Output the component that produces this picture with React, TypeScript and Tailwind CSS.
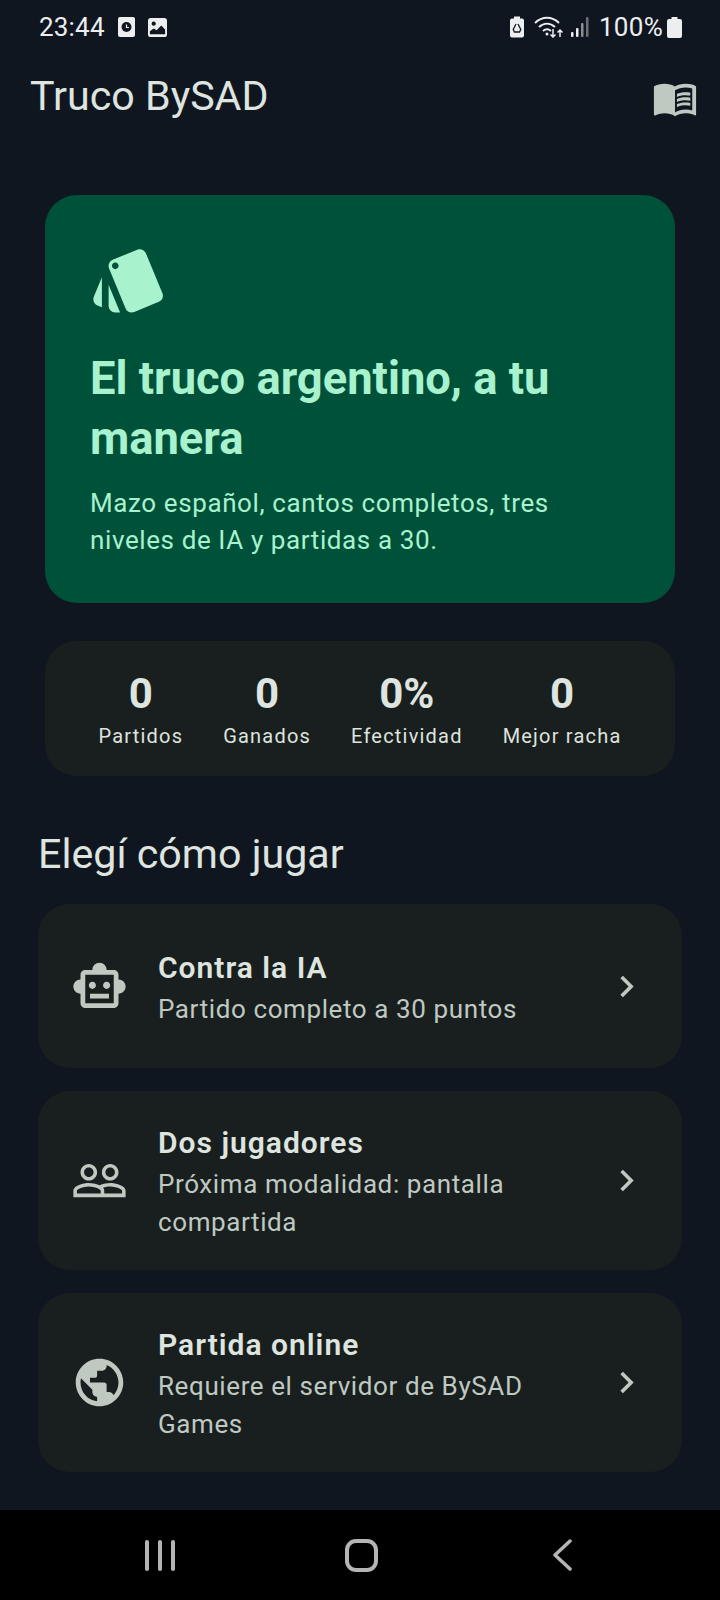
const font = { fontFamily: "Roboto, sans-serif" };

const icons = {
  style:
    "M2.53 19.65l1.34.56v-9.03l-2.43 5.86c-.41 1.02.08 2.19 1.09 2.61zm19.5-3.7L17.07 3.98c-.31-.75-1.04-1.21-1.81-1.23-.26 0-.53.04-.79.15L7.1 5.95c-.75.31-1.21 1.03-1.23 1.8-.01.27.04.54.15.8l4.96 11.97c.31.76 1.05 1.22 1.83 1.23.26 0 .52-.05.77-.15l7.36-3.05c1.02-.42 1.51-1.59 1.09-2.6zM7.88 8.75c-.55 0-1-.45-1-1s.45-1 1-1 1 .45 1 1-.45 1-1 1zm-2 11c0 1.1.9 2 2 2h1.45l-3.45-8.34v6.34z",
  book:
    "M21 5c-1.11-.35-2.33-.5-3.5-.5-1.95 0-4.05.4-5.5 1.5-1.45-1.1-3.55-1.5-5.5-1.5S2.45 4.9 1 6v14.65c0 .25.25.5.5.5.1 0 .15-.05.25-.05C3.1 20.45 5.05 20 6.5 20c1.95 0 4.05.4 5.5 1.5 1.35-.85 3.8-1.5 5.5-1.5 1.65 0 3.35.3 4.75 1.05.1.05.15.05.25.05.25 0 .5-.25.5-.5V6c-.6-.45-1.25-.75-2-1zm0 13.5c-1.1-.35-2.3-.5-3.5-.5-1.7 0-4.15.65-5.5 1.5V8c1.35-.85 3.8-1.5 5.5-1.5 1.2 0 2.4.15 3.5.5v11.5z M17.5 10.5c.88 0 1.73.09 2.5.26V9.24c-.79-.15-1.64-.24-2.5-.24-1.7 0-3.24.29-4.5.83v1.66c1.13-.64 2.7-.99 4.5-.99zM13 12.49v1.66c1.13-.64 2.7-.99 4.5-.99.88 0 1.73.09 2.5.26V11.9c-.79-.15-1.64-.24-2.5-.24-1.7 0-3.24.3-4.5.83zM17.5 14.33c-1.7 0-3.24.29-4.5.83v1.66c1.13-.64 2.7-.99 4.5-.99.88 0 1.73.09 2.5.26v-1.52c-.79-.16-1.64-.24-2.5-.24z",
  robot:
    "M20 9V7c0-1.1-.9-2-2-2h-3c0-1.66-1.34-3-3-3S9 3.34 9 5H6c-1.1 0-2 .9-2 2v2c-1.66 0-3 1.34-3 3s1.34 3 3 3v4c0 1.1.9 2 2 2h12c1.1 0 2-.9 2-2v-4c1.66 0 3-1.34 3-3s-1.34-3-3-3zm-2 10H6V7h12v12zm-9-6c-.83 0-1.5-.67-1.5-1.5S8.17 10 9 10s1.5.67 1.5 1.5S9.83 13 9 13zm7.5-1.5c0 .83-.67 1.5-1.5 1.5s-1.5-.67-1.5-1.5.67-1.5 1.5-1.5 1.5.67 1.5 1.5zM8 15h8v2H8v-2z",
  people:
    "M16.5 13c-1.2 0-3.07.34-4.5 1-1.43-.67-3.3-1-4.5-1C5.33 13 1 14.08 1 16.25V19h22v-2.75c0-2.17-4.33-3.25-6.5-3.25zm-4 4.5h-10v-1.25c0-.54 2.56-1.75 5-1.75s5 1.21 5 1.75v1.25zm9 0H14v-1.25c0-.46-.2-.86-.52-1.22.88-.3 1.96-.53 3.02-.53 2.44 0 5 1.21 5 1.75v1.25zM7.5 12c1.93 0 3.5-1.57 3.5-3.5S9.43 5 7.5 5 4 6.57 4 8.5 5.57 12 7.5 12zm0-5.5c1.1 0 2 .9 2 2s-.9 2-2 2-2-.9-2-2 .9-2 2-2zm9 5.5c1.93 0 3.5-1.57 3.5-3.5S18.43 5 16.5 5 13 6.57 13 8.5s1.57 3.5 3.5 3.5zm0-5.5c1.1 0 2 .9 2 2s-.9 2-2 2-2-.9-2-2 .9-2 2-2z",
  globe:
    "M12 2C6.48 2 2 6.48 2 12s4.48 10 10 10 10-4.48 10-10S17.52 2 12 2zm-1 17.93c-3.95-.49-7-3.85-7-7.93 0-.62.08-1.21.21-1.79L9 15v1c0 1.1.9 2 2 2v1.93zm6.9-2.54c-.26-.81-1-1.39-1.9-1.39h-1v-3c0-.55-.45-1-1-1H8v-2h2c.55 0 1-.45 1-1V7h2c1.1 0 2-.9 2-2v-.41c2.93 1.19 5 4.06 5 7.41 0 2.08-.8 3.97-2.1 5.39z",
  chevron: "M10 6L8.59 7.41 13.17 12l-4.58 4.59L10 18l6-6z",
};

function Icon({ d, className }: { d: string; className: string }) {
  return (
    <svg viewBox="0 0 24 24" fill="currentColor" className={className}>
      <path d={d} />
    </svg>
  );
}

const stats = [
  { value: "0", label: "Partidos" },
  { value: "0", label: "Ganados" },
  { value: "0%", label: "Efectividad" },
  { value: "0", label: "Mejor racha" },
];

const modes = [
  { icon: icons.robot, title: "Contra la IA", lines: ["Partido completo a 30 puntos"], h: "h-[164px]" },
  { icon: icons.people, title: "Dos jugadores", lines: ["Próxima modalidad: pantalla", "compartida"], h: "h-[179px]" },
  { icon: icons.globe, title: "Partida online", lines: ["Requiere el servidor de BySAD", "Games"], h: "h-[179px]" },
];

function StatusBar() {
  return (
    <div className="h-[54px] flex items-center justify-between pl-[39px] pr-[38px] text-[#eceef0]">
      <div className="flex items-center">
        <span className="text-[26px] leading-none tracking-[0.2px]">23:44</span>
        {/* notification icons */}
        <svg viewBox="0 0 17 20" className="w-[17px] h-[20px] ml-[13px]">
          <rect width="17" height="20" rx="2" fill="#eceef0" />
          <circle cx="8.5" cy="10" r="5" fill="#101620" />
          <path d="M8.5 7.5v3h2.500" stroke="#eceef0" strokeWidth="1.2" fill="none" />
        </svg>
        <svg viewBox="0 0 20 20" className="w-[19px] h-[19px] ml-[13px]">
          <rect width="20" height="20" rx="3" fill="#eceef0" />
          <circle cx="6" cy="6" r="2.200" fill="#101620" />
          <path d="M2 17v-3l4-3 3 2 5-5 4 4v5z" fill="#101620" />
        </svg>
      </div>
      <div className="flex items-center">
        <svg viewBox="0 0 14 21" className="w-[14px] h-[22px]">
          <path d="M4 0h6v2h2a2 2 0 0 1 2 2v15a2 2 0 0 1-2 2H2a2 2 0 0 1-2-2V4a2 2 0 0 1 2-2h2z" fill="#eceef0" />
          <path d="M6 7.500 3.200 13l1.300 2.500h5L10.800 13 8 7.500" fill="none" stroke="#101620" strokeWidth="1.300" />
        </svg>
        <svg viewBox="0 0 30 22" className="w-[30px] h-[22px] ml-[10px]" fill="none" stroke="#eceef0" strokeWidth="2">
          <path d="M1 7c7-7 17-7 24 0" />
          <path d="M5 11c5-4.500 11-4.500 16 0" />
          <path d="M9 15c3-2.500 5-2.500 8 0" />
          <circle cx="13" cy="18" r="1.500" fill="#eceef0" stroke="none" />
          <path d="M19 13v8m-2.500-2.500 2.500 2.500 2.500-2.500" strokeWidth="1.500" />
          <path d="M26 21v-7m-2.500 2.500 2.500-2.500 2.500 2.500" strokeWidth="1.500" />
        </svg>
        <svg viewBox="0 0 18 20" className="w-[18px] h-[20px] ml-[7px]">
          <rect x="0" y="15" width="2.500" height="5" rx="1" fill="#eceef0" />
          <rect x="5" y="11" width="2.500" height="9" rx="1" fill="#eceef0" />
          <rect x="10" y="6" width="2.500" height="14" rx="1" fill="#8a8f96" />
          <rect x="15" y="0" width="2.500" height="20" rx="1" fill="#6a6f76" />
        </svg>
        <span className="text-[26px] leading-none ml-[10px] tracking-[0.3px]">100%</span>
        <svg viewBox="0 0 15 21" className="w-[15px] h-[21px] ml-[4px]">
          <path d="M4.500 0h6v2h2.500a2 2 0 0 1 2 2v15a2 2 0 0 1-2 2H2a2 2 0 0 1-2-2V4a2 2 0 0 1 2-2h2.500z" fill="#eceef0" />
        </svg>
      </div>
    </div>
  );
}

export default function App() {
  return (
    <div className="w-[720px] h-[1600px] flex flex-col bg-[#101620] overflow-hidden" style={font}>
      <StatusBar />

      {/* App bar */}
      <div className="h-[88px] flex items-center justify-between pl-[30px] pr-[22px] text-[#dee4df]">
        <h1 className="text-[41.2px] leading-none font-normal -mt-[2px]">Truco BySAD</h1>
        <Icon d={icons.book} className="w-[46px] h-[46px] text-[#bfc9c2] -mt-[1px]" />
      </div>

      <div className="flex-1 flex flex-col px-[38px] pt-[53px]">
        {/* Hero */}
        <section className="mx-[7px] h-[408px] rounded-[32px] bg-[#00513a] px-[45px] pt-[45px] text-[#a8f2ce]">
          <Icon d={icons.style} className="w-[80px] h-[80px] -ml-[1px]" />
          <h2 className="mt-[29px] text-[45.3px] leading-[60px] font-bold">El truco argentino, a tu manera</h2>
          <p className="mt-[16px] text-[26px] leading-[37px] tracking-[0.6px]">
            Mazo español, cantos completos, tres niveles de IA y partidas a 30.
          </p>
        </section>

        {/* Stats */}
        <section className="mx-[7px] mt-[38px] h-[135px] pt-[4px] rounded-[32px] bg-[#191f1e] flex items-center justify-center gap-[40px] text-[#dee4df]">
          {stats.map((s) => (
            <div key={s.label} className="flex flex-col items-center">
              <span className="text-[42px] leading-[48px] font-bold">{s.value}</span>
              <span className="mt-[2px] text-[20px] leading-[32px] font-normal tracking-[1.2px]">{s.label}</span>
            </div>
          ))}
        </section>

        <h2 className="mt-[51px] text-[41.2px] leading-[54px] font-normal text-[#dee4df]">Elegí cómo jugar</h2>

        <div className="mt-[23px] flex flex-col gap-[23px]">
          {modes.map((m) => (
            <div key={m.title} className={`${m.h} rounded-[32px] bg-[#191f1e] flex items-center pl-[33px] pr-[34px]`}>
              <Icon d={m.icon} className="w-[57px] h-[57px] text-[#bfc9c2] shrink-0" />
              <div className="ml-[30px] flex-1">
                <div className="text-[30px] leading-[45px] font-semibold tracking-[1px] text-[#dee4df]">{m.title}</div>
                {m.lines.map((l) => (
                  <div key={l} className="text-[26px] leading-[38px] tracking-[0.6px] text-[#bfc9c2]">{l}</div>
                ))}
              </div>
              <Icon d={icons.chevron} className="w-[43px] h-[43px] text-[#bfc9c2] shrink-0" />
            </div>
          ))}
        </div>
      </div>

      {/* Android nav bar */}
      <div className="h-[90px] bg-black flex items-center justify-between pl-[145px] pr-[148px]">
        <div className="flex gap-[9px]">
          <div className="w-[4px] h-[31px] rounded-full bg-[#b5b5b5]" />
          <div className="w-[4px] h-[31px] rounded-full bg-[#b5b5b5]" />
          <div className="w-[4px] h-[31px] rounded-full bg-[#b5b5b5]" />
        </div>
        <div className="w-[33px] h-[33px] rounded-[11px] border-[4px] border-[#b5b5b5] -ml-[6px]" />
        <svg viewBox="0 0 19 32" className="w-[19px] h-[32px]" fill="none" stroke="#b5b5b5" strokeWidth="3.500" strokeLinecap="round" strokeLinejoin="round">
          <path d="M17 2 2 16l15 14" />
        </svg>
      </div>
    </div>
  );
}
